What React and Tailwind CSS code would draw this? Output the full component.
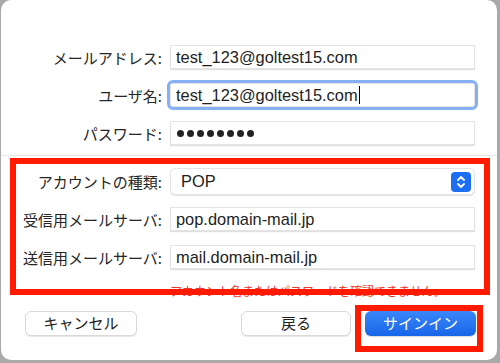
import React from 'react';

const jp = { fontFamily: '"Noto Sans CJK JP", "Noto Sans", sans-serif' };
const latin = { fontFamily: '"Liberation Sans", Arial, "Noto Sans CJK JP", sans-serif' };

const Label = ({ children }) => (
  <div className="w-[162px] shrink-0 text-right text-[15px] leading-none text-[#262626] pr-[1px]" style={jp}>
    {children}
  </div>
);

const Field = ({ children, focused }) => (
  <div
    className={
      'w-[305px] h-[24px] ml-[7px] flex items-center pl-[5px] bg-white border border-[#e4e4e4] shadow-[0_1px_1px_rgba(0,0,0,0.12)] text-[16.4px] text-[#1e1e1e] ' +
      (focused ? 'rounded-[3px] outline outline-[3px] outline-[#86b0f4]' : '')
    }
    style={latin}
  >
    {children}
  </div>
);

const Button = ({ children, className }) => (
  <button
    className={
      'h-[25px] rounded-[6px] bg-white border border-[#d9d9d9] shadow-[0_1px_1px_rgba(0,0,0,0.1)] text-[15px] text-[#222] ' +
      className
    }
    style={jp}
  >
    {children}
  </button>
);

export default function App() {
  return (
    <div className="relative w-[500px] h-[363px] bg-[#a9a9a9] overflow-hidden">
      <div className="ml-[1px] mr-[3px] h-[360px] bg-white rounded-[10px] pt-[45px]">
        {/* account rows */}
        <div className="flex items-center">
          <Label>メールアドレス:</Label>
          <Field>test_123@goltest15.com</Field>
        </div>
        <div className="flex items-center mt-[14px]">
          <Label>ユーザ名:</Label>
          <Field focused>
            test_123@goltest15.com
            <span className="inline-block w-[1px] h-[18px] bg-black ml-[1px]" />
          </Field>
        </div>
        <div className="flex items-center mt-[14px]">
          <Label>パスワード:</Label>
          <Field>
            <div className="flex gap-[3px] pl-[1px]">
              {[0, 1, 2, 3, 4, 5, 6, 7].map((i) => (
                <div key={i} className="w-[7px] h-[7px] rounded-full bg-[#222]" />
              ))}
            </div>
          </Field>
        </div>

        <div className="mt-[10px] h-px bg-[#e6e6e6]" />

        {/* server rows */}
        <div className="flex items-center mt-[12px]">
          <Label>アカウントの種類:</Label>
          <div
            className="w-[305px] h-[27px] ml-[7px] flex items-center justify-between pl-[10px] pr-[3px] bg-white rounded-[5px] border border-[#e4e4e4] shadow-[0_1px_1px_rgba(0,0,0,0.12)] text-[16.4px] text-[#1e1e1e]"
            style={latin}
          >
            POP
            <div className="w-[20px] h-[20px] rounded-[4px] bg-[#1c6ff2] flex items-center justify-center">
              <svg width="10" height="14" viewBox="0 0 10 14" fill="none" stroke="white" strokeWidth="1.8" strokeLinecap="round" strokeLinejoin="round">
                <path d="M2 5l3-3 3 3" />
                <path d="M2 9l3 3 3-3" />
              </svg>
            </div>
          </div>
        </div>
        <div className="flex items-center mt-[12px]">
          <Label>受信用メールサーバ:</Label>
          <Field>pop.domain-mail.jp</Field>
        </div>
        <div className="flex items-center mt-[14px]">
          <Label>送信用メールサーバ:</Label>
          <Field>mail.domain-mail.jp</Field>
        </div>

        <div className="ml-[169px] mt-[14px] text-[12px] leading-[16px] text-[#ee3a2c]" style={jp}>
          アカウント名またはパスワードを確認できません。
        </div>

        {/* buttons */}
        <div className="flex items-center justify-between mt-[12px] pl-[24px] pr-[21px]">
          <Button className="w-[112px]">キャンセル</Button>
          <div className="flex items-center gap-[14px]">
            <Button className="w-[110px]">戻る</Button>
            <button
              className="w-[111px] h-[25px] rounded-[6px] bg-gradient-to-b from-[#3a86f8] to-[#1766e9] text-white text-[15px] shadow-[0_1px_1px_rgba(0,0,0,0.15)]"
              style={jp}
            >
              サインイン
            </button>
          </div>
        </div>
      </div>

      {/* annotation boxes */}
      <div className="absolute left-[10px] top-[158px] w-[480px] h-[137px] border-[6px] border-[#ff1a00]" />
      <div className="absolute left-[355px] top-[305px] w-[128px] h-[47px] border-[6px] border-[#ff1a00]" />
    </div>
  );
}
